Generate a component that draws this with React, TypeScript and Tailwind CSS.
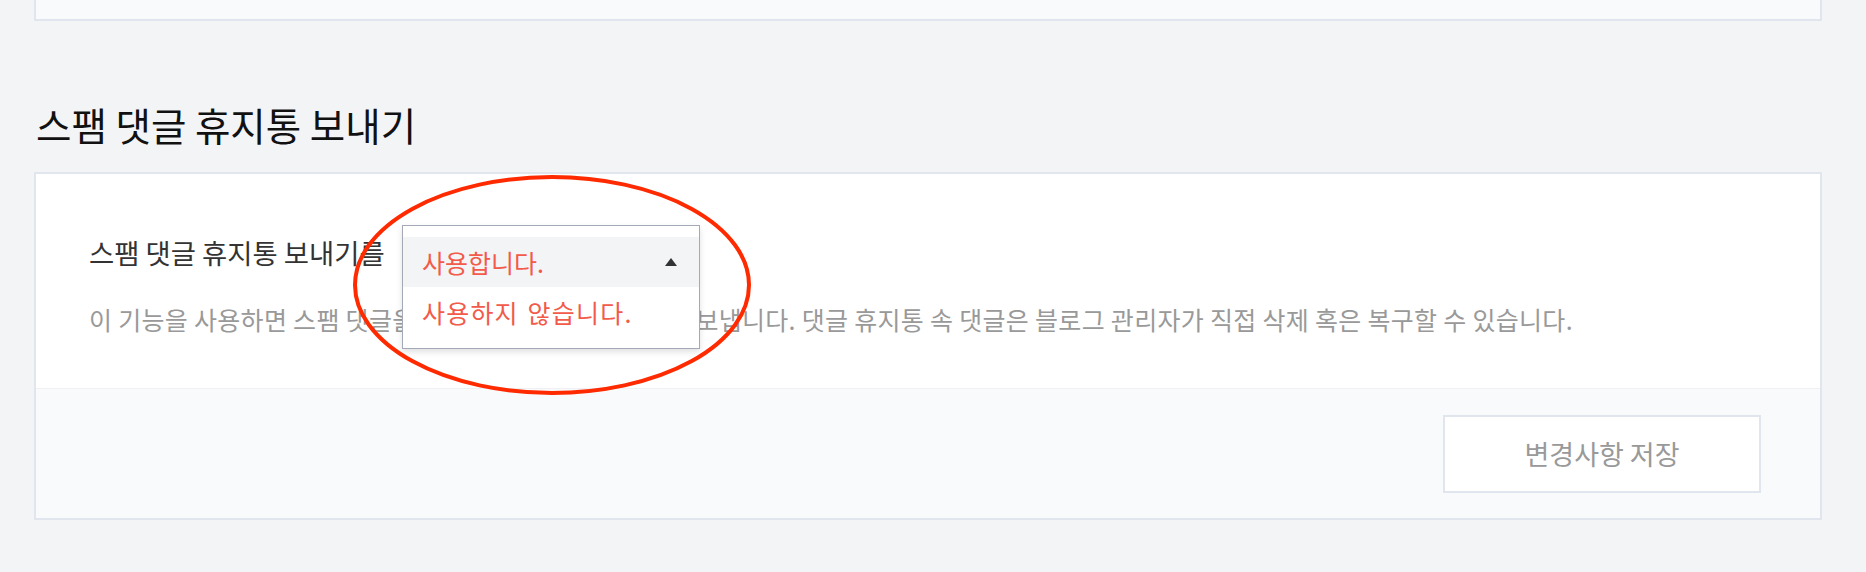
export default function App() {
  return (
    <div className="relative h-[572px] w-full overflow-hidden bg-[#f3f4f6] pl-[34px] pr-[44px] font-['Noto_Sans_CJK_KR',sans-serif]">
      {/* previous section (cut off) */}
      <div className="h-[21px] border-x-2 border-b-2 border-[#e1e5ee] bg-[#f9fafc]" />

      <h2 className="mt-[83px] ml-[2px] text-[38.5px] leading-[40px] font-normal text-[#111]">
        스팸 댓글 휴지통 보내기
      </h2>

      <div className="mt-[28px] border-2 border-[#e1e5ee] bg-white">
        <div className="h-[215px] border-b border-[#eef0f4] px-[53px] pt-[64px]">
          <div className="relative flex h-[28px] items-center">
            <span className="text-[27.4px] leading-[28px] text-[#333]">스팸 댓글 휴지통 보내기를</span>

            {/* open select list */}
            <div className="absolute left-[313px] top-[-13px] w-[298px] border border-[#a3a9b6] bg-white py-[11px] shadow-[0_3px_6px_rgba(0,0,0,0.12)]">
              <div className="flex h-[50px] items-center justify-between bg-[#f3f4f6] pl-[19px] pr-[22px] text-[25px] leading-[25px] text-[#f25a4a]">
                <span>사용합니다.</span>
                <svg width="12" height="8" viewBox="0 0 12 8">
                  <path d="M6 0L12 8H0Z" fill="#333" />
                </svg>
              </div>
              <div className="flex h-[50px] items-center pl-[19px] text-[25px] leading-[25px] tracking-[1.2px] text-[#f25a4a] [word-spacing:2px]">
                사용하지 않습니다.
              </div>
            </div>
          </div>
          <p className="mt-[41px] whitespace-nowrap text-[25px] leading-[24px] tracking-[0.3px] text-[#999]">
            이 기능을 사용하면 스팸 댓글을 자동으로 댓글 휴지통으로 보냅니다. 댓글 휴지통 속 댓글은 블로그 관리자가 직접 삭제 혹은 복구할 수 있습니다.
          </p>
        </div>
        <div className="flex justify-end bg-[#f9fafc] pt-[26px] pb-[25px] pr-[59px]">
          <button className="h-[78px] w-[318px] border-2 border-[#e1e5ee] bg-white text-[27px] text-[#999]">
            변경사항 저장
          </button>
        </div>
      </div>

      {/* hand-drawn highlight */}
      <svg className="pointer-events-none absolute left-0 top-0" width="1866" height="572">
        <ellipse cx="552" cy="285" rx="197" ry="108" fill="none" stroke="#ff2a00" strokeWidth="4" />
      </svg>
    </div>
  );
}
